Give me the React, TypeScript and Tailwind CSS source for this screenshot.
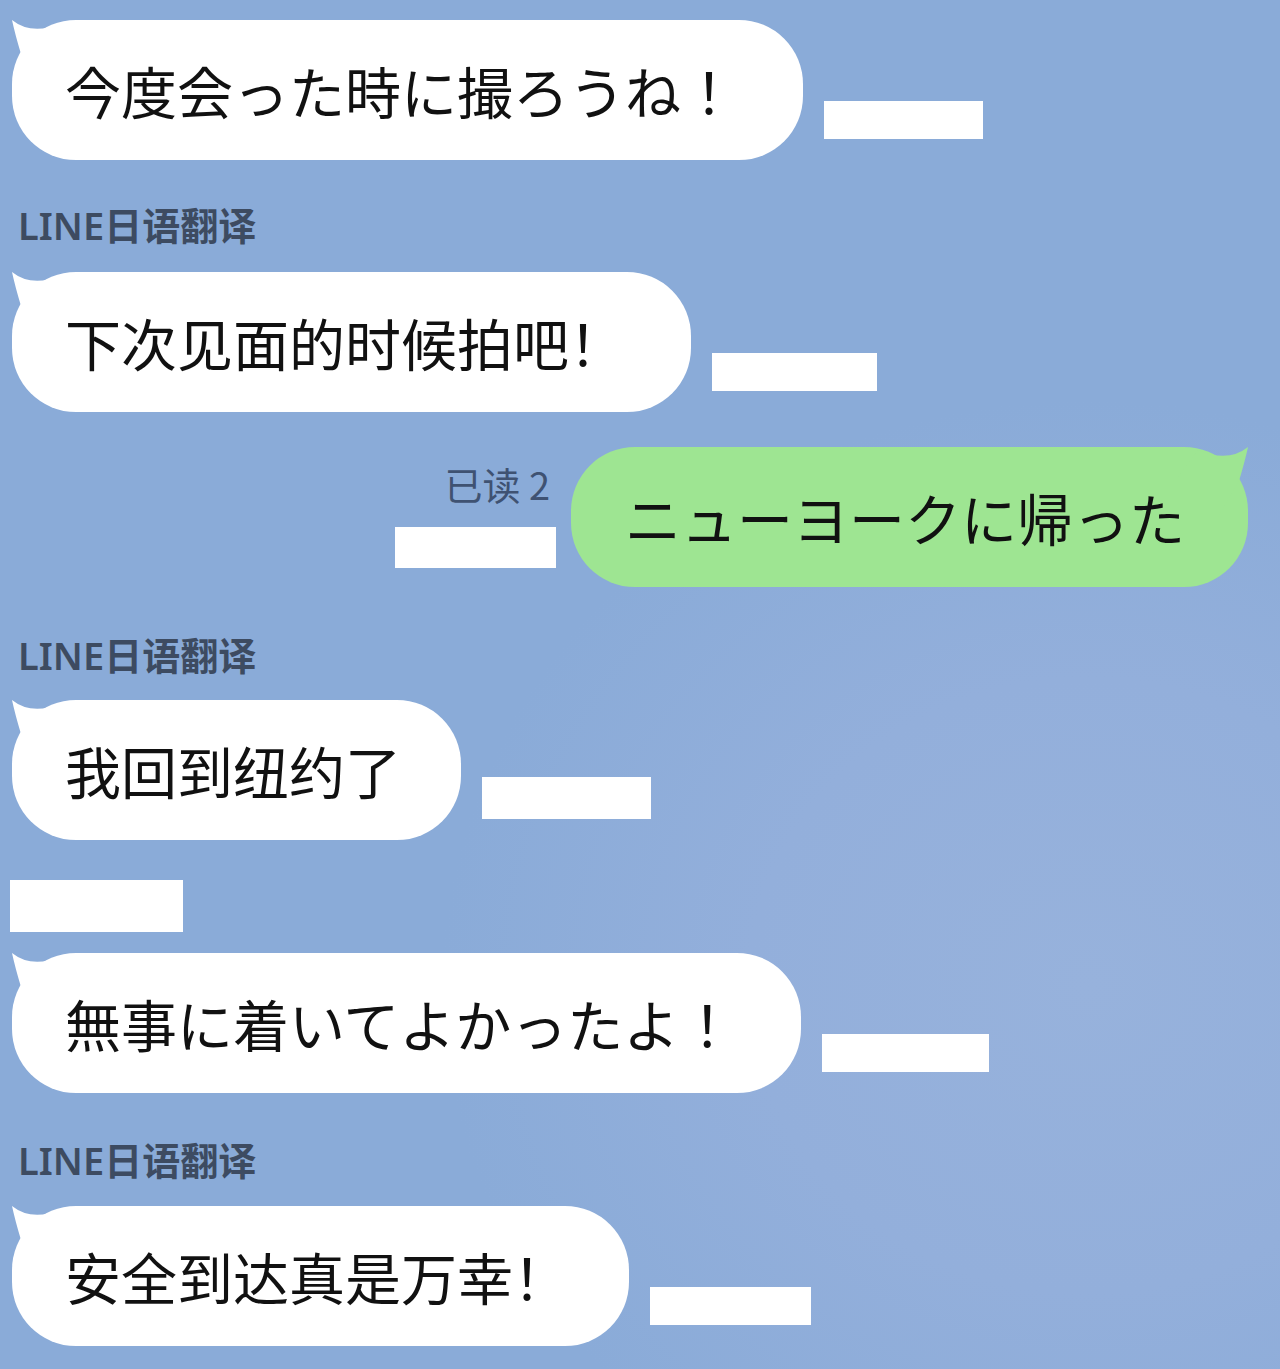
const JP = "font-['Noto_Sans_CJK_JP',sans-serif]";
const SC = "font-['Noto_Sans_CJK_SC',sans-serif]";

function Tail({ color, right }: { color: string; right?: boolean }) {
  return (
    <svg
      width="70"
      height="70"
      viewBox="0 0 70 70"
      className={right ? "absolute right-0 top-0 -scale-x-100" : "absolute left-0 top-0"}
    >
      <path d="M0 0 Q20 16 50 3 L70 30 L30 70 L9 34 Q3 14 0 0 Z" fill={color} />
    </svg>
  );
}

function Stamp({ w, h }: { w: number; h: number }) {
  return <div className="bg-white" style={{ width: w, height: h }} />;
}

function InBubble({
  text,
  lang,
  stamp,
  tight,
}: {
  text: string;
  lang: "jp" | "sc";
  stamp: [number, number];
  tight?: boolean;
}) {
  return (
    <div className="flex items-end pl-[12px]">
      <div
        className={`relative flex h-[140px] items-center rounded-[64px] bg-white pl-[53px] text-[56px] leading-none text-[#111] ${
          tight ? "pr-[60px]" : "pr-[66px]"
        } ${lang === "jp" ? JP : SC}`}
      >
        <Tail color="#ffffff" />
        <span className="relative">{text}</span>
      </div>
      <div className="mb-[21px] ml-[21px]">
        <Stamp w={stamp[0]} h={stamp[1]} />
      </div>
    </div>
  );
}

function OutBubble({ text, stamp }: { text: string; stamp: [number, number] }) {
  return (
    <div className="flex items-end justify-end pr-[32px]">
      <div className="mb-[19px] mr-[15px] flex flex-col items-end gap-[24px]">
        <span className={`pr-[6px] text-[38px] leading-none text-[#3f5272] ${SC}`}>已读 2</span>
        <Stamp w={stamp[0]} h={stamp[1]} />
      </div>
      <div
        className={`relative flex h-[140px] items-center rounded-[64px] bg-[#9ee592] pl-[54px] pr-[63px] text-[56px] leading-none text-[#111] ${JP}`}
      >
        <Tail color="#9ee592" right />
        <span className="relative">{text}</span>
      </div>
    </div>
  );
}

function Label({ text }: { text: string }) {
  return (
    <div className="h-[40px] pl-[18px] font-['Noto_Sans','Noto_Sans_CJK_SC',sans-serif] text-[38px] font-semibold leading-[40px] text-[#3d4b61]">
      {text}
    </div>
  );
}

export default function App() {
  return (
    <div className="h-[1369px] w-full overflow-hidden bg-[#8aabd8] bg-[radial-gradient(ellipse_at_85%_72%,#97b2dc_0%,#93afdb_22%,#8aabd8_42%)] pt-[20px]">
      <InBubble text="今度会った時に撮ろうね！" lang="jp" stamp={[159, 38]} />
      <div className="mt-[45px]">
        <Label text="LINE日语翻译" />
      </div>
      <div className="mt-[27px]">
        <InBubble text="下次见面的时候拍吧！" lang="sc" stamp={[165, 38]} />
      </div>
      <div className="mt-[35px]">
        <OutBubble text="ニューヨークに帰った" stamp={[161, 41]} />
      </div>
      <div className="mt-[48px]">
        <Label text="LINE日语翻译" />
      </div>
      <div className="mt-[25px]">
        <InBubble text="我回到纽约了" lang="sc" stamp={[169, 42]} tight />
      </div>
      <div className="ml-[10px] mt-[40px] h-[52px] w-[173px] bg-white" />
      <div className="mt-[21px]">
        <InBubble text="無事に着いてよかったよ！" lang="jp" stamp={[167, 38]} />
      </div>
      <div className="mt-[47px]">
        <Label text="LINE日语翻译" />
      </div>
      <div className="mt-[26px]">
        <InBubble text="安全到达真是万幸！" lang="sc" stamp={[161, 38]} tight />
      </div>
    </div>
  );
}
